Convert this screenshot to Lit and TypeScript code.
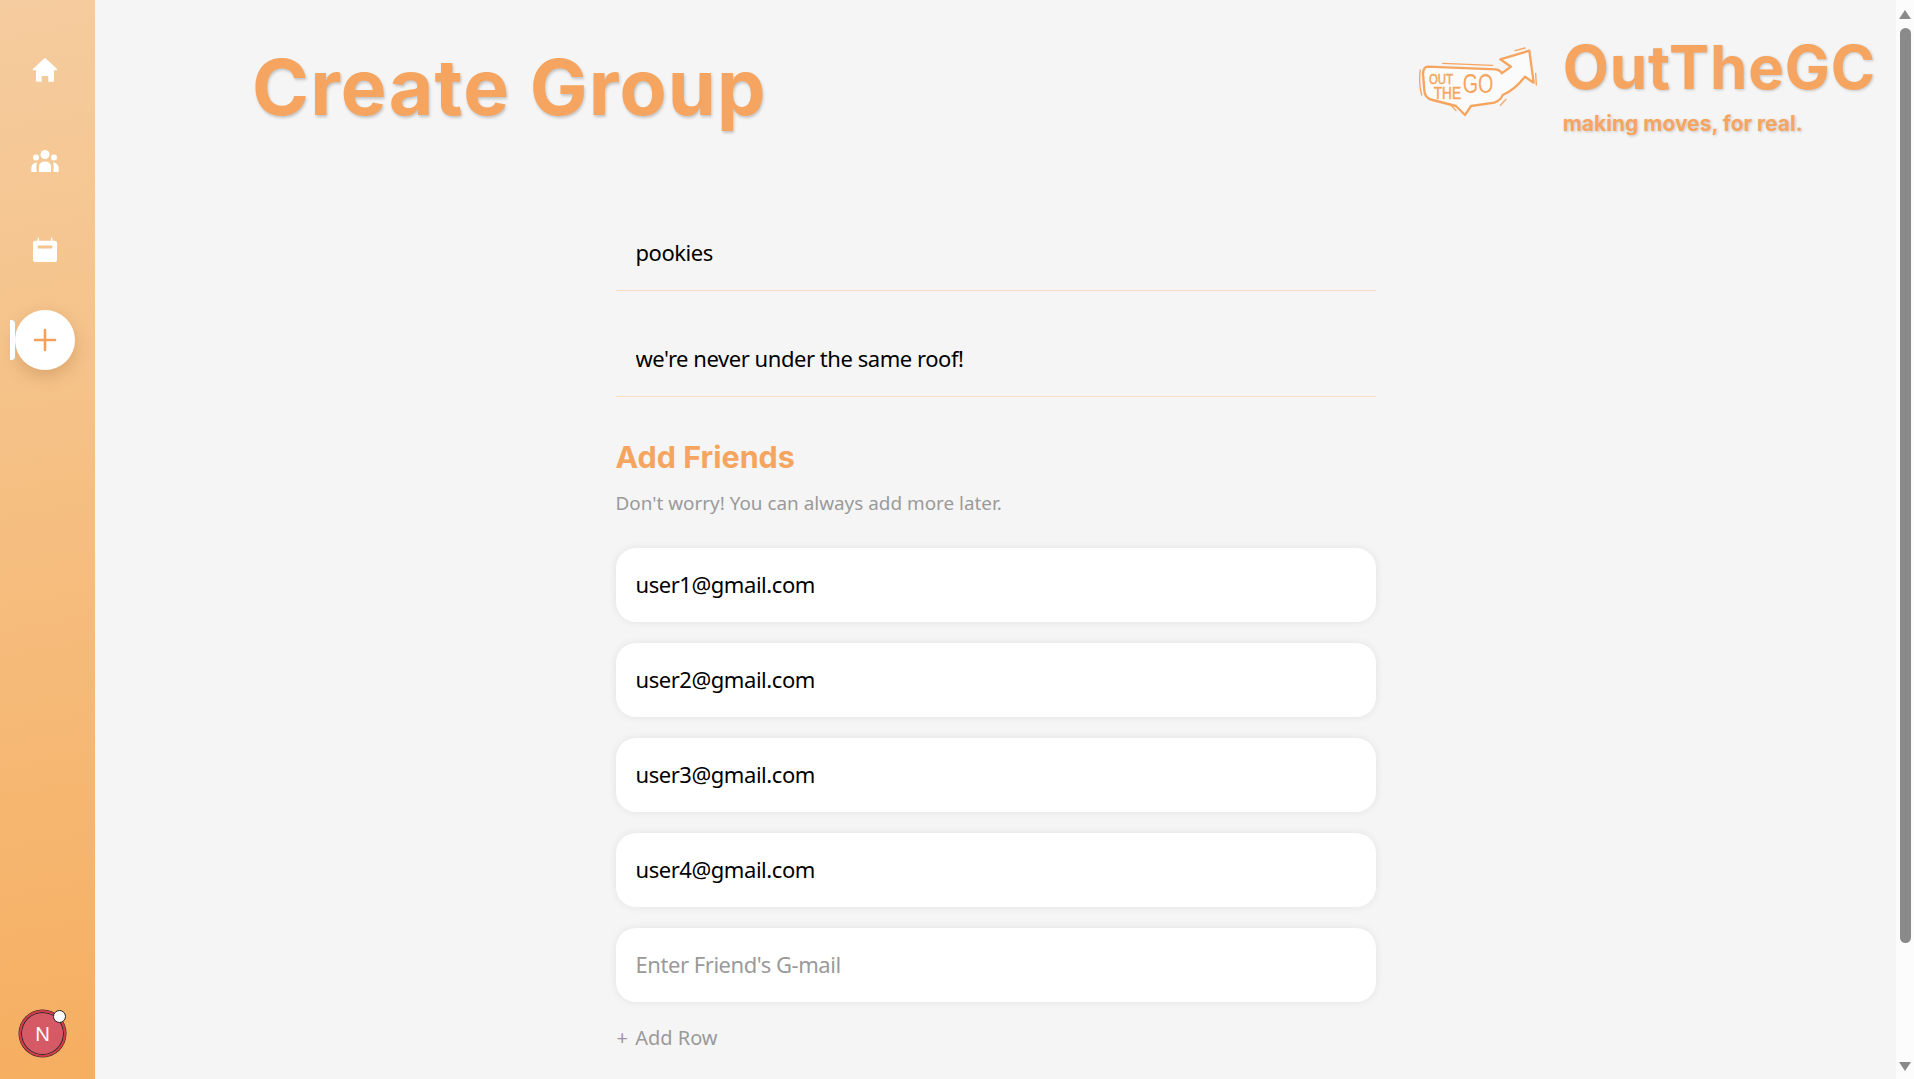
import { LitElement, css, html } from 'lit'
import { customElement } from 'lit/decorators.js'

const friends = ['user1@gmail.com', 'user2@gmail.com', 'user3@gmail.com', 'user4@gmail.com']

@customElement('app-root')
export class AppRoot extends LitElement {
  static styles = css`
    :host {
      display: flex;
      height: 100vh;
      overflow: hidden;
      background: #f5f5f5;
      font-family: 'Noto Sans', 'Open Sans', sans-serif;
    }

    /* sidebar */
    .sidebar {
      width: 95px;
      flex: none;
      display: flex;
      flex-direction: column;
      align-items: center;
      padding: 40px 5px 22px 0;
      box-sizing: border-box;
      background: linear-gradient(170deg, #f5cc9f 0%, #f5c48c 30%, #f6ae60 100%);
    }
    .nav-item {
      position: relative;
      width: 60px;
      height: 60px;
      margin-bottom: 30px;
      display: flex;
      align-items: center;
      justify-content: center;
      flex: none;
    }
    .nav-item svg {
      width: 30px;
      height: 30px;
      display: block;
    }
    .nav-item.active {
      background: #fff;
      border-radius: 50%;
      box-shadow: 0 6px 16px rgba(150, 100, 50, 0.3);
    }
    .nav-item.active::before {
      content: '';
      position: absolute;
      left: -5px;
      top: 10px;
      width: 5px;
      height: 40px;
      background: #fff;
      border-radius: 0 4px 4px 0;
    }
    .avatar {
      position: relative;
      margin-top: auto;
      margin-right: 5px;
      width: 47px;
      height: 47px;
      box-sizing: border-box;
      border-radius: 50%;
      background: #d65a66;
      border: 2px solid #d23a48;
      box-shadow: 0 0 0 1px #2a2a2a inset, 0 0 0 0.5px #2a2a2a;
      color: #fff;
      display: flex;
      align-items: center;
      justify-content: center;
      font-size: 20px;
    }
    .avatar::after {
      content: '';
      position: absolute;
      right: -2px;
      top: -2px;
      width: 11px;
      height: 11px;
      background: #fff;
      border: 1px solid #222;
      border-radius: 50%;
    }

    /* main column */
    .main {
      flex: 1;
      min-width: 0;
      display: flex;
      flex-direction: column;
    }
    .header {
      display: flex;
      justify-content: space-between;
      height: 216px;
      box-sizing: border-box;
      padding: 32px 20px 0 157px;
    }
    h1 {
      margin: 0;
      font-family: Inter, sans-serif;
      font-weight: 700;
      font-size: 77px;
      line-height: 110px;
      letter-spacing: 1.2px;
      color: #f6a560;
      text-shadow: 1px 2px 3px rgba(0, 0, 0, 0.2);
    }
    .brand {
      display: flex;
      gap: 12px;
      margin-top: -5px;
    }
    .logo {
      width: 140px;
      height: 90px;
      margin-top: 13px;
      flex: none;
    }
    .brand-name {
      font-family: Inter, sans-serif;
      font-weight: 700;
      font-size: 60px;
      line-height: 80px;
      letter-spacing: 0.9px;
      color: #f6a560;
      text-shadow: 1px 1px 3px rgba(0, 0, 0, 0.2);
    }
    .tagline {
      font-family: Inter, sans-serif;
      font-weight: 700;
      font-size: 21px;
      line-height: 28px;
      margin-top: 3px;
      color: #f6a560;
      text-shadow: 1px 1px 3px rgba(0, 0, 0, 0.2);
    }

    /* form */
    .form {
      width: 760px;
      margin: 0 auto;
      display: flex;
      flex-direction: column;
    }
    input {
      display: block;
      width: 100%;
      box-sizing: border-box;
      border: 0;
      outline: 0;
      padding: 0 20px 2px;
      font-family: inherit;
      font-size: 22px;
      letter-spacing: -0.45px;
      color: #000;
      background: transparent;
    }
    input::placeholder {
      color: #9a9a9a;
      opacity: 1;
    }
    .line {
      height: 75px;
      border-bottom: 1px solid #f8dcc3;
      margin-bottom: 31px;
    }
    h2 {
      margin: 5px 0 0;
      font-family: Inter, sans-serif;
      font-weight: 700;
      font-size: 30.5px;
      line-height: 48px;
      color: #f6a560;
    }
    .hint {
      margin: 7px 0 30px;
      font-size: 18.9px;
      line-height: 30px;
      color: #9a9a9a;
    }
    .card {
      height: 74px;
      margin-bottom: 21px;
      background: #fff;
      border-radius: 20px;
      box-shadow: 0 0 8px rgba(0, 0, 0, 0.08);
    }
    .add-row {
      margin-top: 0;
      font-size: 20px;
      line-height: 30px;
      color: #9a9a9a;
    }
    .add-row span {
      margin: 0 2px 0 1px;
    }

    /* scrollbar */
    .scrollbar {
      width: 18px;
      flex: none;
      background: #fcfcfc;
      display: flex;
      flex-direction: column;
      align-items: center;
      padding: 10px 0 8px;
      box-sizing: border-box;
    }
    .arrow-up,
    .arrow-down {
      width: 0;
      height: 0;
      flex: none;
      border-left: 6px solid transparent;
      border-right: 6px solid transparent;
    }
    .arrow-up {
      border-bottom: 9px solid #8a8a8a;
    }
    .arrow-down {
      border-top: 9px solid #8a8a8a;
    }
    .thumb {
      width: 11px;
      height: 915px;
      margin: 9px 0 auto;
      background: #8a8a8a;
      border-radius: 6px;
    }
  `

  renderLogo() {
    return html`
      <svg class="logo" viewBox="0 0 420 270" fill="none">
        <path
          d="M50 80 L255 88 Q270 92 272 100 L300 80 L268 58 L355 32 L368 128 L342 110 Q310 150 275 165 Q270 180 250 188 L180 198 L162 225 L135 198 L65 180 Q40 175 40 150 L36 100 Q38 80 50 80Z"
          fill="#fbfbfb"
          stroke="#f6a560"
          stroke-width="7"
          stroke-linejoin="round"
        />
        <path
          d="M28 90 Q22 130 32 165 M95 70 L245 76 M312 32 L342 24 M374 100 L376 135 M120 196 L135 212 M268 196 L285 178"
          stroke="#f6a560"
          stroke-width="4"
          stroke-linecap="round"
        />
        <text x="54" y="131" font-family="Liberation Sans, sans-serif" font-size="42" fill="#f6a560" stroke="#f6a560" stroke-width="1.5" textLength="72" lengthAdjust="spacingAndGlyphs">OUT</text>
        <text x="68" y="176" font-family="Liberation Sans, sans-serif" font-size="48" fill="#f6a560" stroke="#f6a560" stroke-width="1.5" textLength="82" lengthAdjust="spacingAndGlyphs">THE</text>
        <text x="155" y="158" font-family="Liberation Sans, sans-serif" font-size="84" fill="#f6a560" textLength="92" lengthAdjust="spacingAndGlyphs">GO</text>
      </svg>
    `
  }

  render() {
    return html`
      <aside class="sidebar">
        <div class="nav-item">
          <svg viewBox="0 0 30 30" fill="#fff">
            <path d="M15 2.7 L27.3 14.2 L27 15.2 L24 15.2 L24 25.7 Q24 26.7 23 26.7 L18.3 26.7 L18.3 22 Q18.3 21 17.3 21 L12.7 21 Q11.7 21 11.7 22 L11.7 26.7 L7 26.7 Q6 26.7 6 25.7 L6 15.2 L3 15.2 L2.7 14.2 Z" />
          </svg>
        </div>
        <div class="nav-item">
          <svg viewBox="0 0 30 30" fill="#fff">
            <circle cx="15" cy="9.5" r="4.5" />
            <circle cx="6" cy="12.5" r="3" />
            <circle cx="24" cy="12.5" r="3" />
            <path d="M9 27 L9 22 Q9 16.5 15 16.5 Q21 16.5 21 22 L21 27 Z" />
            <path d="M1.3 27 L1.3 23 Q1.5 18.5 6 17.5 Q7 17.5 6.7 18.5 Q6 21 6.7 27 Z" />
            <path d="M28.7 27 L28.7 23 Q28.5 18.5 24 17.5 Q23 17.5 23.3 18.5 Q24 21 23.3 27 Z" />
          </svg>
        </div>
        <div class="nav-item">
          <svg viewBox="0 0 30 30">
            <path fill="#fff" d="M5 5.7 H25 Q27 5.7 27 7.7 V25 Q27 27 25 27 H5 Q3 27 3 25 V7.7 Q3 5.7 5 5.7 Z" />
            <path stroke="#fff" stroke-width="1.6" stroke-linecap="round" d="M8.3 3.4 V6 M21.7 3.4 V6" />
            <rect x="7.7" y="10.4" width="14.6" height="3.2" rx="1.2" fill="#f5c48f" />
          </svg>
        </div>
        <div class="nav-item active">
          <svg viewBox="0 0 30 30">
            <path stroke="#f5a05a" stroke-width="2.6" stroke-linecap="round" d="M15 5 V25 M5 15 H25" />
          </svg>
        </div>
        <div class="avatar">N</div>
      </aside>

      <div class="main">
        <header class="header">
          <h1>Create Group</h1>
          <div class="brand">
            ${this.renderLogo()}
            <div>
              <div class="brand-name">OutTheGC</div>
              <div class="tagline">making moves, for real.</div>
            </div>
          </div>
        </header>

        <section class="form">
          <input class="line" .value=${'pookies'} />
          <input class="line" .value=${"we're never under the same roof!"} />
          <h2>Add Friends</h2>
          <p class="hint">Don't worry! You can always add more later.</p>
          ${friends.map((f) => html`<input class="card" .value=${f} />`)}
          <input class="card" placeholder="Enter Friend's G-mail" />
          <div class="add-row"><span>+</span> Add Row</div>
        </section>
      </div>

      <div class="scrollbar">
        <div class="arrow-up"></div>
        <div class="thumb"></div>
        <div class="arrow-down"></div>
      </div>
    `
  }
}
